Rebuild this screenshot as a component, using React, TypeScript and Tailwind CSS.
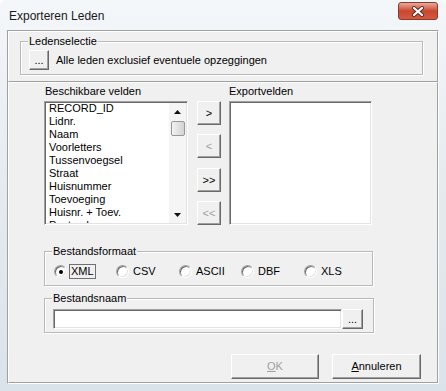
import React from "react";

const font = "font-['Liberation_Sans',Arial,sans-serif]";
const raised =
  "bg-[#f0f0f0] border border-t-white border-l-white border-r-[#696969] border-b-[#696969] shadow-[inset_-1px_-1px_0_#a0a0a0]";
const sunken =
  "bg-white border border-t-[#a0a0a0] border-l-[#a0a0a0] border-r-white border-b-white shadow-[inset_1px_1px_0_#696969,inset_-1px_-1px_0_#e3e3e3] p-[1px]";
const etched =
  "relative border border-[#b9b9b9] shadow-[inset_1px_1px_0_#fff,1px_1px_0_#fff]";

const fields = [
  "RECORD_ID",
  "Lidnr.",
  "Naam",
  "Voorletters",
  "Tussenvoegsel",
  "Straat",
  "Huisnummer",
  "Toevoeging",
  "Huisnr. + Toev.",
  "Postcode",
];

function GroupLabel({ children }: { children: React.ReactNode }) {
  return (
    <span className="absolute -top-[7px] left-[7px] px-[1px] bg-[#f0f0f0] text-[11px] leading-[13px] text-black">
      {children}
    </span>
  );
}

function Radio({ label, checked, w }: { label: string; checked?: boolean; w: string }) {
  return (
    <div className={`flex items-center ${w}`}>
      <span className="w-[13px] h-[13px] shrink-0 rounded-full bg-white border border-t-[#a0a0a0] border-l-[#a0a0a0] border-r-white border-b-white shadow-[inset_1px_1px_0_#696969,inset_-1px_-1px_0_#e3e3e3] flex items-center justify-center">
        {checked && <span className="w-[4px] h-[4px] rounded-full bg-black" />}
      </span>
      <span
        className={`ml-[2px] px-[1px] border text-[11px] leading-[13px] text-black ${
          checked ? "border-[#707070]" : "border-transparent"
        }`}
      >
        {label}
      </span>
    </div>
  );
}

function ArrowBtn({ label, disabled, mt }: { label: string; disabled?: boolean; mt: string }) {
  return (
    <div
      className={`${raised} ${mt} w-[24px] h-[24px] flex items-center justify-center text-[11px] leading-[13px] ${
        disabled ? "text-[#a0a0a0]" : "text-black"
      }`}
    >
      {label}
    </div>
  );
}

export default function App() {
  return (
    <div className="w-[446px] h-[391px] bg-white">
      <div
        className={`w-[446px] h-[391px] flex flex-col rounded-t-[6px] bg-linear-to-b from-[#f4f7fa] via-[#e4eaf0] to-[#dbe3ea] ${font}`}
      >
        {/* Title bar */}
        <div className="h-[30px] flex items-start shrink-0">
          <div className="ml-[9px] mt-[8px] text-[12px] leading-[16px] text-[#1a1a1a]">Exporteren Leden</div>
          <div className="ml-auto mr-[8px] mt-[2px] w-[40px] h-[18px] rounded-[3px] border border-[#8a3a2c] bg-linear-to-b from-[#e9a99b] via-[#c9472f] to-[#d35a3f] flex items-center justify-center">
            <svg width="14" height="11" viewBox="0 0 14 11">
              <path d="M3 2 L11 9 M11 2 L3 9" stroke="#5b2a22" strokeWidth="4" strokeLinecap="round" />
              <path d="M3 2 L11 9 M11 2 L3 9" stroke="#ffffff" strokeWidth="2.2" strokeLinecap="round" />
            </svg>
          </div>
        </div>

        {/* Client area */}
        <div className="ml-[7px] w-[432px] h-[354px] shrink-0 bg-[#f0f0f0] border border-t-[#a0a0a0] border-l-[#a0a0a0] border-r-white border-b-white flex flex-col">
          {/* top panel */}
          <div className="h-[51px] shrink-0 border border-t-white border-l-white border-r-[#a0a0a0] border-b-[#a0a0a0]">
            <div className={`${etched} ml-[11px] mt-[9px] w-[403px] h-[34px] pl-[8px] pt-[8px] flex items-start`}>
              <GroupLabel>Ledenselectie</GroupLabel>
              <div className={`${raised} w-[20px] h-[20px] flex items-end justify-center pb-[4px] text-[11px] leading-[10px] text-black`}>
                ...
              </div>
              <div className="ml-[7px] text-[11px] leading-[20px] text-black">
                Alle leden exclusief eventuele opzeggingen
              </div>
            </div>
          </div>

          {/* bottom panel */}
          <div className="flex-1 border border-t-white border-l-white border-r-[#a0a0a0] border-b-[#a0a0a0] flex flex-col">
            <div className="flex ml-[35px] mt-[2px]">
              <div className="flex flex-col">
                <div className="h-[13px] pl-[1px] text-[11px] leading-[13px] text-black">Beschikbare velden</div>
                <div className={`${sunken} mt-[3px] w-[144px] h-[124px] flex`}>
                  <div className="flex-1 overflow-hidden pl-[3px] -mt-[1px]">
                    {fields.map((f) => (
                      <div key={f} className="h-[13px] text-[11px] leading-[13px] text-black whitespace-nowrap">
                        {f}
                      </div>
                    ))}
                  </div>
                  <div className="w-[17px] h-full bg-[#f5f5f5] flex flex-col items-center">
                    <div className="h-[17px] w-full flex items-center justify-center">
                      <svg width="7" height="4" viewBox="0 0 7 4">
                        <path d="M3.5 0 L7 4 L0 4 Z" fill="#111" />
                      </svg>
                    </div>
                    <div className="mt-[1px] w-[14px] h-[15px] rounded-[2px] border border-[#979797] bg-linear-to-r from-[#f2f2f2] to-[#d3d3d3]" />
                    <div className="mt-auto h-[17px] w-full flex items-center justify-center">
                      <svg width="7" height="4" viewBox="0 0 7 4">
                        <path d="M0 0 L7 0 L3.5 4 Z" fill="#111" />
                      </svg>
                    </div>
                  </div>
                </div>
              </div>

              <div className="ml-[9px] pt-[16px] flex flex-col">
                <ArrowBtn label=">" mt="mt-0" />
                <ArrowBtn label="<" disabled mt="mt-[9px]" />
                <ArrowBtn label=">>" mt="mt-[10px]" />
                <ArrowBtn label="<<" disabled mt="mt-[9px]" />
              </div>

              <div className="ml-[8px] flex flex-col">
                <div className="h-[13px] text-[11px] leading-[13px] text-black">Exportvelden</div>
                <div className={`${sunken} mt-[3px] w-[143px] h-[124px]`} />
              </div>
            </div>

            {/* Bestandsformaat */}
            <div className={`${etched} ml-[35px] mt-[26px] w-[329px] h-[35px] pl-[9px] pt-[12px] flex items-start`}>
              <GroupLabel>Bestandsformaat</GroupLabel>
              <Radio label="XML" checked w="w-[62px]" />
              <Radio label="CSV" w="w-[63px]" />
              <Radio label="ASCII" w="w-[62px]" />
              <Radio label="DBF" w="w-[63px]" />
              <Radio label="XLS" w="w-[60px]" />
            </div>

            {/* Bestandsnaam */}
            <div className={`${etched} ml-[35px] mt-[12px] w-[330px] h-[35px] pl-[8px] pt-[10px] flex items-start`}>
              <GroupLabel>Bestandsnaam</GroupLabel>
              <div className={`${sunken} w-[289px] h-[20px]`} />
              <div className={`${raised} w-[21px] h-[20px] flex items-end justify-center pb-[4px] text-[11px] leading-[10px] text-black`}>
                ...
              </div>
            </div>

            {/* Buttons */}
            <div className="flex ml-[222px] mt-[21px] gap-[13px]">
              <div className={`${raised} w-[88px] h-[25px] flex items-center justify-center text-[11px] leading-[13px] text-[#a0a0a0]`}>
                <span>
                  <span className="underline">O</span>K
                </span>
              </div>
              <div className={`${raised} w-[89px] h-[25px] flex items-center justify-center text-[11px] leading-[13px] text-black`}>
                <span>
                  <span className="underline">A</span>nnuleren
                </span>
              </div>
            </div>
          </div>
        </div>
      </div>
    </div>
  );
}
